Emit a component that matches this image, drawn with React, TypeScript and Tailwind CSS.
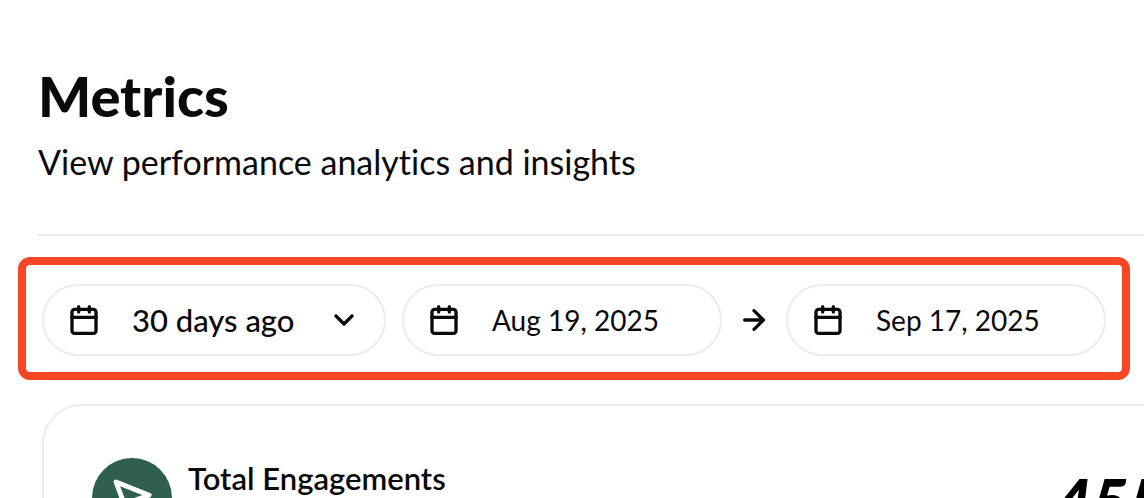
import { ArrowRight, Calendar, ChevronDown } from "lucide-react";

function DateButton({ label, value }: { label: string; value: string }) {
  return (
    <button
      type="button"
      aria-label={`${label}: ${value}`}
      className="flex h-18 w-80 shrink-0 items-center rounded-full border-2 border-[#ececec] pl-6"
    >
      <Calendar className="size-8 shrink-0" strokeWidth={2.5} />
      <span className="ml-8 text-[28px] leading-10">{value}</span>
    </button>
  );
}

function RangeSelect() {
  return (
    <div className="relative flex h-18 w-86 shrink-0 items-center">
      <select
        aria-label="Date range"
        defaultValue="30"
        className="h-full w-full appearance-none rounded-full border-2 border-[#ececec] bg-transparent pl-22 text-[31px] font-medium"
      >
        <option value="7">7 days ago</option>
        <option value="30">30 days ago</option>
        <option value="90">90 days ago</option>
      </select>
      <Calendar className="pointer-events-none absolute left-6.5 size-8" strokeWidth={2.5} />
      <ChevronDown className="pointer-events-none absolute right-6.5 size-8" strokeWidth={2.5} />
    </div>
  );
}

function CursorIcon() {
  return (
    <svg viewBox="0 0 24 24" className="size-12" fill="none" stroke="currentColor" strokeWidth="2.4" strokeLinejoin="round">
      <path d="M4 4 20.6 10.6 13.2 13.2 10.2 20.6Z" />
    </svg>
  );
}

export default function App() {
  return (
    <main className="h-screen overflow-hidden bg-white font-['Lato',sans-serif] text-[#0a0a0a] [font-variant-ligatures:none]">
      <header className="ml-9.5 border-b-2 border-[#ececec] pt-16 pb-[50px]">
        <h1 className="text-[56px] leading-16 font-black">Metrics</h1>
        <p className="mt-3 text-[34px] leading-11">View performance analytics and insights</p>
      </header>

      <section
        aria-label="Date filters"
        className="mt-[21px] ml-4.5 flex w-fit items-center rounded-xl border-8 border-[#f64625] px-4 pt-[19px] pb-4"
      >
        <RangeSelect />
        <div className="ml-4 flex items-center gap-4">
          <DateButton label="Start date" value="Aug 19, 2025" />
          <ArrowRight className="size-8" strokeWidth={2.5} />
          <DateButton label="End date" value="Sep 17, 2025" />
        </div>
      </section>

      <article className="mt-6 -mr-18 ml-10.5 flex items-start justify-between rounded-[40px] border-2 border-[#ececec] px-12 py-13">
        <div className="flex items-start gap-4">
          <div className="flex size-20 items-center justify-center rounded-full bg-[#2f604f] text-white">
            <CursorIcon />
          </div>
          <h2 className="text-[31px] leading-10 font-semibold">Total Engagements</h2>
        </div>
        <p className="mt-3 text-[64px] leading-16 font-black italic text-black">455</p>
      </article>
    </main>
  );
}
